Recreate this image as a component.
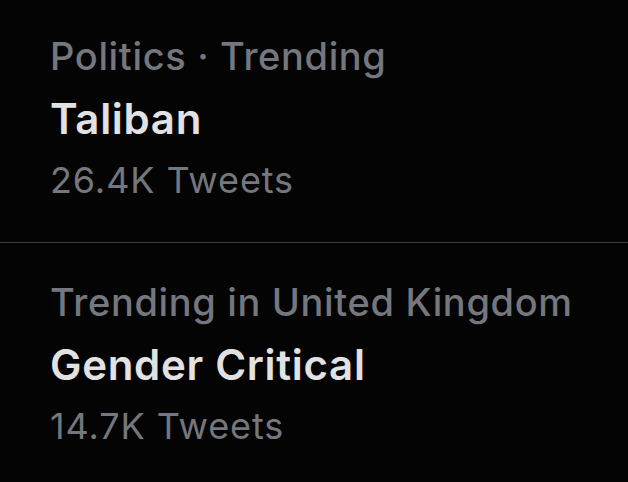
import React from "react";

const trends = [
  { label: "Politics · Trending", title: "Taliban", count: "26.4K Tweets" },
  { label: "Trending in United Kingdom", title: "Gender Critical", count: "14.7K Tweets" },
];

const TrendItem = ({ trend, top }) => (
  <div className={`px-[50px] ${top ? "pt-[33px] pb-[37px]" : "pt-[36px]"}`}>
    <p className="text-[38px] leading-[46px] font-medium text-[#74777d] tracking-[0.65px]">
      {trend.label}
    </p>
    <p className="mt-[10px] text-[42px] leading-[60px] font-semibold text-[#e2e2e3] tracking-[0.7px]">
      {trend.title}
    </p>
    <p className="mt-[6px] text-[36px] leading-[50px] text-[#74777d] tracking-[0.9px]">
      {trend.count}
    </p>
  </div>
);

export default function App() {
  return (
    <div
      className="w-[628px] h-[482px] overflow-hidden bg-[#040404]"
      style={{ fontFamily: "Inter, 'Noto Sans', sans-serif" }}
    >
      <TrendItem trend={trends[0]} top />
      <div className="h-px bg-[#3b3c3e]" />
      <TrendItem trend={trends[1]} />
    </div>
  );
}
